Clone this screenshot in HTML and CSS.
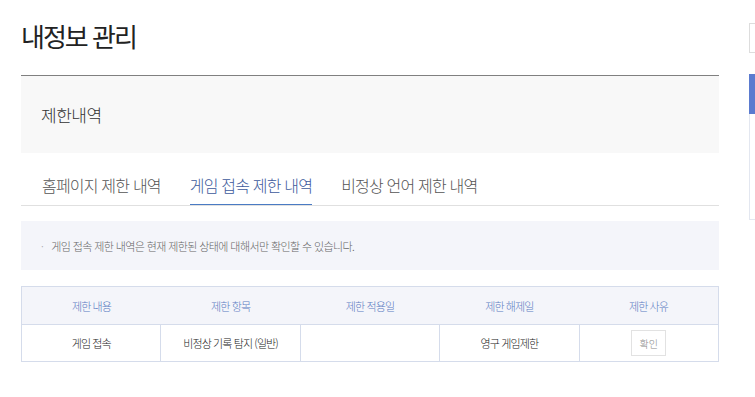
FILE: index.html
```html
<!DOCTYPE html>
<html lang="ko">

<head>
  <meta charset="UTF-8" />
  <meta name="viewport" content="width=device-width, initial-scale=1.0" />
  <title>내정보 관리</title>
  <link rel="stylesheet" href="styles.css">
</head>

<body>
  <div class="page">
    <main class="main">
      <h1 class="page-title">내정보 관리</h1>
      <section class="panel">
        <div class="panel-head">제한내역</div>
        <ul class="tabs">
          <li class="tab">홈페이지 제한 내역</li>
          <li class="tab active">게임 접속 제한 내역</li>
          <li class="tab">비정상 언어 제한 내역</li>
        </ul>
        <div class="notice">
          <p>게임 접속 제한 내역은 현재 제한된 상태에 대해서만 확인할 수 있습니다.</p>
        </div>
        <table class="limit-table">
          <thead>
            <tr>
              <th>제한 내용</th>
              <th>제한 항목</th>
              <th>제한 적용일</th>
              <th>제한 해제일</th>
              <th>제한 사유</th>
            </tr>
          </thead>
          <tbody>
            <tr>
              <td>게임 접속</td>
              <td>비정상 기록 탐지 (일반)</td>
              <td></td>
              <td>영구 게임제한</td>
              <td><button class="btn-check">확인</button></td>
            </tr>
          </tbody>
        </table>
      </section>
    </main>
    <aside class="side">
      <div class="side-box"></div>
      <div class="side-menu">
        <div class="side-menu-head"></div>
        <div class="side-menu-body"></div>
      </div>
    </aside>
  </div>
</body>

</html>
```

FILE: styles.css
```css
body {
  margin: 0;
  background: #fff;
  font-family: "Noto Sans CJK KR", "Noto Sans", sans-serif;
  font-weight: 300;
  color: #333;
  overflow: hidden;
}

.page {
  display: flex;
  gap: 30px;
  padding-left: 21px;
}

.main {
  width: 698px;
  flex-shrink: 0;
}

.page-title {
  margin: 18px 0 21px;
  font-size: 26px;
  line-height: 36px;
  font-weight: 400;
  color: #222;
  letter-spacing: -2px;
}

.panel {
  border-top: 1px solid #808080;
}

.panel-head {
  height: 77px;
  display: flex;
  align-items: center;
  padding: 0 0 0 20px;
  box-sizing: border-box;
  background: #f8f8f8;
  font-size: 17px;
  color: #333;
  letter-spacing: -0.5px;
}

.tabs {
  display: flex;
  gap: 29px;
  margin: 0;
  padding: 0 0 0 21px;
  list-style: none;
  border-bottom: 1px solid #e0e0e0;
}

.tab {
  padding: 20px 0 7px;
  font-size: 16px;
  line-height: 24px;
  color: #555;
  border-bottom: 1px solid transparent;
  letter-spacing: -0.8px;
}

.tab.active {
  color: #3d5a9c;
  border-bottom-color: #4a7bc4;
}

.notice {
  margin-top: 15px;
  height: 49px;
  display: flex;
  align-items: center;
  padding-left: 20px;
  background: #f4f5fa;
}

.notice p {
  margin: 0;
  font-size: 11px;
  color: #666;
  letter-spacing: -0.6px;
}

.notice p::before {
  content: "·";
  color: #aaa;
  margin-right: 8px;
}

.limit-table {
  width: 100%;
  margin-top: 16px;
  border-collapse: collapse;
  table-layout: fixed;
  border: 1px solid #d5dceb;
  font-size: 11px;
  letter-spacing: -0.9px;
}

.limit-table th {
  height: 37px;
  padding: 0;
  font-weight: 300;
  color: #5b7cc2;
  background: #f4f5fa;
  border-bottom: 1px solid #d5dceb;
}

.limit-table td {
  height: 36px;
  padding: 0;
  text-align: center;
  color: #222;
  border-left: 1px solid #d5dceb;
}

.btn-check {
  width: 35px;
  height: 26px;
  padding: 0;
  border: 1px solid #e2e2e2;
  background: #fff;
  font-family: inherit;
  font-weight: 300;
  font-size: 10px;
  color: #888;
}

.side {
  width: 60px;
  flex-shrink: 0;
  padding-top: 23px;
}

.side-box {
  height: 28px;
  border: 1px solid #ddd;
}

.side-menu {
  margin-top: 21px;
}

.side-menu-head {
  height: 40px;
  background: #5b7bcf;
}

.side-menu-body {
  height: 105px;
  border: 1px solid #e3e7f0;
  border-top: 0;
}
```
